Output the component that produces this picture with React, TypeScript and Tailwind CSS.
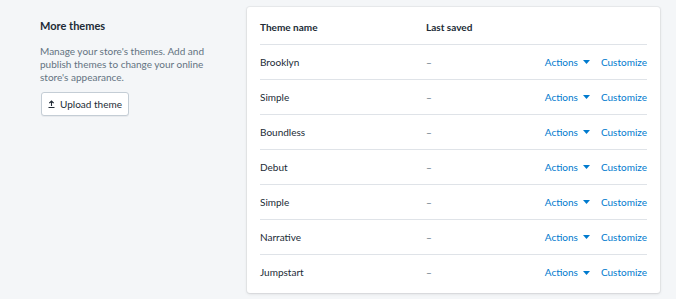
const themes = ["Brooklyn", "Simple", "Boundless", "Debut", "Simple", "Narrative", "Jumpstart"];

function Caret() {
  return (
    <svg width="7" height="4" viewBox="0 0 7 4" className="ml-[5px] fill-[#007ace]">
      <path d="M0 0h7L3.5 4z" />
    </svg>
  );
}

function UploadIcon() {
  return (
    <svg width="7" height="8" viewBox="0 0 7 8" className="fill-none stroke-[#212b36]">
      <path d="M3.5 6V1M1.3 3.2 3.5 1l2.2 2.2M0.5 7.5h6" strokeWidth="1.1" />
    </svg>
  );
}

export default function App() {
  return (
    <div
      className="flex h-[299px] w-full bg-[#f4f6f8] text-[10px] text-[#212b36]"
      style={{ fontFamily: "Lato, 'Open Sans', sans-serif" }}
    >
      {/* Annotation column */}
      <div className="ml-[40px] w-[168px] pt-[19px]">
        <h2 className="text-[11px] font-bold leading-[14px] text-[#212b36]">More themes</h2>
        <p className="mt-[12px] leading-[13px] text-[#637381]">
          Manage your store's themes. Add and publish themes to change your online store's appearance.
        </p>
        <button className="mt-[8px] ml-px flex h-[24px] w-[88px] items-center justify-center gap-[5px] rounded-[3px] border border-[#c4cdd5] bg-white text-[10px] text-[#212b36] shadow-[0_1px_0_rgba(22,29,37,0.05)]">
          <UploadIcon />
          Upload theme
        </button>
      </div>

      {/* Themes card */}
      <div className="ml-[39px] mt-[7px] h-[286px] w-[413px] rounded-[3px] bg-white px-[13px] shadow-[0_0_0_1px_rgba(63,63,68,0.05),0_1px_3px_0_rgba(63,63,68,0.15)]">
        <div className="flex h-[38px] items-center border-b border-[#dfe3e8] pt-[3px] font-bold">
          <div className="w-[166px]">Theme name</div>
          <div>Last saved</div>
        </div>
        {themes.map((t, i) => (
          <div
            key={i}
            className={`flex h-[35px] items-center text-[#212b36] ${
              i < themes.length - 1 ? "border-b border-[#dfe3e8]" : ""
            }`}
          >
            <div className="w-[166px]">{t}</div>
            <div className="flex-1 text-[#637381]">–</div>
            <div className="flex items-center text-[#007ace]">
              Actions
              <Caret />
            </div>
            <div className="ml-[11px] text-[#007ace]">Customize</div>
          </div>
        ))}
      </div>
    </div>
  );
}
